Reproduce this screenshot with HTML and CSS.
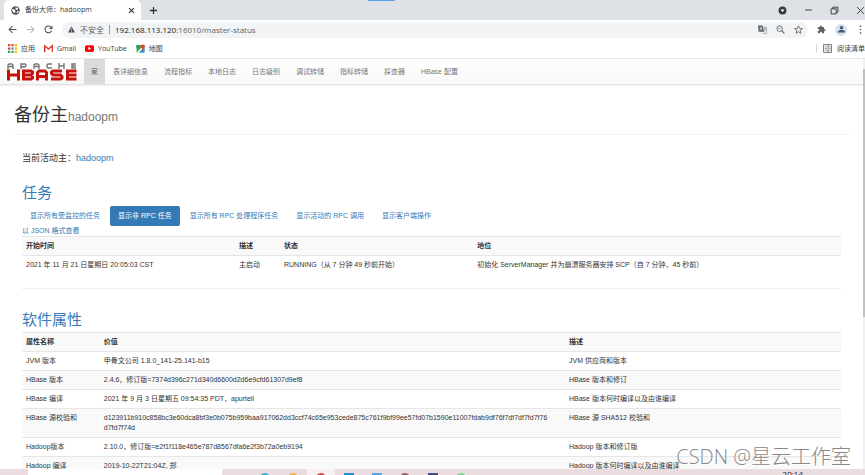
FILE: index.html
```html
<!DOCTYPE html>
<html lang="zh-CN">
<head>
    <meta charset="utf-8">
    <title>备份大师：hadoopm</title>
    <link rel="stylesheet" href="styles.css">
</head>
<body>

<header class="browser">
    <div class="tabstrip">
        <div class="tab">
            <svg class="icon" viewBox="0 0 16 16"><circle cx="8" cy="8" r="7.5" fill="#4d5156"/><path d="M2 5l4 1 2 3-1 4-3-2-2-3zM8 2l5 2-2 3-3-1zM11 9l3 0-2 4-2-1z" fill="#fff"/></svg>
            <span class="tab-title">备份大师：hadoopm</span>
            <button class="icon-btn" aria-label="关闭标签页"><svg class="icon-sm" viewBox="0 0 10 10"><path d="M1.5 1.5l7 7M8.5 1.5l-7 7" stroke="#333" stroke-width="1.6"/></svg></button>
        </div>
        <button class="icon-btn" aria-label="新标签页"><svg class="icon" viewBox="0 0 10 10"><path d="M5 1v8M1 5h8" stroke="#333" stroke-width="1.4"/></svg></button>
        <div class="progress"></div>
        <div class="window-btns">
            <button class="icon-btn" aria-label="搜索标签页"><svg class="icon" viewBox="0 0 16 16"><circle cx="8" cy="8" r="7" fill="#35383c"/><path d="M4.500 6h7L8 11z" fill="#fff"/></svg></button>
            <button class="icon-btn" aria-label="最小化"><svg class="icon" viewBox="0 0 8 8"><path d="M1 3.500h6" stroke="#333" stroke-width=".8"/></svg></button>
            <button class="icon-btn" aria-label="还原"><svg class="icon" viewBox="0 0 8 8"><path d="M1 2.500h4.500v4.500H1zM2.500 2.500V1H7v4.500H5.500" fill="none" stroke="#333" stroke-width=".8"/></svg></button>
            <button class="icon-btn" aria-label="关闭"><svg class="icon" viewBox="0 0 8 8"><path d="M1 1l6 6M7 1L1 7" stroke="#333" stroke-width=".8"/></svg></button>
        </div>
    </div>

    <div class="toolbar">
        <button class="icon-btn" aria-label="后退"><svg class="icon" viewBox="0 0 16 16"><path d="M15 8H2M8 2L2 8l6 6" fill="none" stroke="#505357" stroke-width="1.800"/></svg></button>
        <button class="icon-btn" aria-label="前进"><svg class="icon" viewBox="0 0 16 16"><path d="M1 8h13M8 2l6 6-6 6" fill="none" stroke="#b5b7ba" stroke-width="1.800"/></svg></button>
        <button class="icon-btn" aria-label="刷新"><svg class="icon" viewBox="0 0 16 16"><path d="M13.500 10A6 6 0 1 1 12.500 4" fill="none" stroke="#505357" stroke-width="2"/><path d="M15 1v6H9z" fill="#505357"/></svg></button>
        <div class="address">
            <svg class="icon-sm" viewBox="0 0 16 16"><path d="M8 1l8 14H0z" fill="#4d5156"/><path d="M8 6v4M8 11.500v2" stroke="#f1f3f4" stroke-width="1.500"/></svg>
            <span class="insecure">不安全</span>
            <span class="divider"></span>
            <span class="url"><b>192.168.113.120</b>:16010/master-status</span>
            <button class="icon-btn" aria-label="翻译"><svg class="icon" viewBox="0 0 16 16"><path d="M0 1h8l3 11H1z" fill="#5f6368"/><path d="M8 4h7v11H9" fill="none" stroke="#777"/><path d="M3 5h4M5 4v1M3 9c2-1 3-2 3-4M4 6l3 3" stroke="#fff" fill="none"/><path d="M10 7h4M12 6v1M10 12c2-1 3-3 3-5" stroke="#777" fill="none"/></svg></button>
            <button class="icon-btn" aria-label="缩放"><svg class="icon" viewBox="0 0 16 16"><circle cx="6.500" cy="6.500" r="5" fill="none" stroke="#5f6368" stroke-width="1.500"/><path d="M10 10l5 5" stroke="#5f6368" stroke-width="2"/><path d="M4 6.500h5" stroke="#5f6368"/></svg></button>
            <button class="icon-btn" aria-label="收藏"><svg class="icon" viewBox="0 0 16 16"><path d="M8 1.500l2 4.500 5 .5-4 3.200 1.300 5L8 12l-4.300 2.700L5 9.700 1 6.500 6 6z" fill="none" stroke="#5f6368" stroke-width="1.500"/></svg></button>
        </div>
        <button class="icon-btn" aria-label="扩展程序"><svg class="icon" viewBox="0 0 24 24"><path d="M20.500 11H19V7a2 2 0 0 0-2-2h-4V3.500a2.500 2.500 0 0 0-5 0V5H4a2 2 0 0 0-2 2v3.800h1.500a2.700 2.700 0 0 1 0 5.400H2V20a2 2 0 0 0 2 2h3.800v-1.500a2.700 2.700 0 0 1 5.400 0V22H17a2 2 0 0 0 2-2v-4h1.500a2.500 2.500 0 0 0 0-5z" fill="#5f6368"/></svg></button>
        <button class="avatar" aria-label="用户"><svg class="icon-sm" viewBox="0 0 16 16"><circle cx="8" cy="4" r="4" fill="#4a5878"/><path d="M0 15v-2c0-5 16-5 16 0v2z" fill="#4a5878"/></svg></button>
        <button class="icon-btn" aria-label="菜单"><svg class="icon" viewBox="0 0 16 16"><circle cx="8" cy="2" r="1.500" fill="#5f6368"/><circle cx="8" cy="8" r="1.500" fill="#5f6368"/><circle cx="8" cy="14" r="1.500" fill="#5f6368"/></svg></button>
    </div>

    <div class="bookmarks">
        <a href="#"><svg class="icon" viewBox="0 0 8 8"><path d="M0 0h2v2H0zM0 3h2v2H0z" fill="#ea4335"/><path d="M3 0h2v2H3z" fill="#ea4335"/><path d="M6 0h2v2H6zM6 6h2v2H6z" fill="#fbbc04"/><path d="M3 3h2v2H3z" fill="#4285f4"/><path d="M6 3h2v2H6z" fill="#fbbc04"/><path d="M0 6h2v2H0zM3 6h2v2H3z" fill="#34a853"/></svg>应用</a>
        <a href="#"><svg class="icon" viewBox="0 0 16 16"><path d="M1 14V3l7 6 7-6v11" fill="none" stroke="#ea4335" stroke-width="2.500"/><path d="M1 14V7" stroke="#c5221f" stroke-width="2"/></svg>Gmail</a>
        <a href="#"><svg class="icon" viewBox="0 0 16 16"><rect y="2" width="16" height="12" rx="3" fill="#f00"/><path d="M6 5l5 3-5 3z" fill="#fff"/></svg>YouTube</a>
        <a href="#"><svg class="icon" viewBox="0 0 16 16"><path d="M1 2h14v13H1z" fill="#34a853"/><path d="M1 15L13 3l2 2L5 15z" fill="#fff"/><path d="M6 15l9-9v9z" fill="#4285f4"/><path d="M1 2h6L1 8z" fill="#1b8a4b"/><path d="M12 10L8 5a4 4 0 1 1 8 0z" fill="#ea4335"/></svg>地图</a>
        <button class="reading"><svg class="icon" viewBox="0 0 16 16"><path d="M1 1h14v14H1zM9 1v14" fill="none" stroke="#5f6368" stroke-width="1.500"/><path d="M3 5h4M3 8h4M3 11h4M11 5h3M11 8h3M11 11h3" stroke="#5f6368"/></svg>阅读清单</button>
    </div>
</header>

<div class="viewport">
    <div class="page">
        <nav class="navbar">
            <a class="brand" href="#" aria-label="Apache HBase">
                <svg class="logo" viewBox="0 0 70 18">
                    <g fill="none" stroke="#777" stroke-width="1.400">
                        <path d="M1 6V2l1-1h3l1 1v4M1 3.500h5"/>
                        <path d="M14 6V1h4l1 1v1l-1 .8h-4"/>
                        <path d="M27 6V2l1-1h3l1 1v4M27 3.500h5"/>
                        <path d="M45 1h-4l-1 1v2l1 1h4"/>
                        <path d="M52 0v6M57 0v6M52 3h5"/>
                        <path d="M69 1h-4v4h4M65 3h4"/>
                    </g>
                    <g fill="none" stroke="#c4120c" stroke-width="3">
                        <path d="M1.500 6.500V17.500M11.500 6.500V17.500M1.500 12H11.500"/>
                        <path d="M16 8h8l1.500 1v1.500L24 12h-8M24 12l1.500 1.500V15L24 16H16M16.500 6.500V17.500"/>
                        <path d="M30.500 17.500V9.500L32 8h6l1.500 1.500v8M30.500 13.500h9"/>
                        <path d="M55 8h-9l-1.500 1v1.500L46 12h7.500l1.500 1.500V15l-1.500 1H44"/>
                        <path d="M69.500 8H60.500v8h9M60.500 12h9"/>
                    </g>
                </svg>
            </a>
            <a class="active" href="#">家</a>
            <a href="#">表详细信息</a>
            <a href="#">流程指标</a>
            <a href="#">本地日志</a>
            <a href="#">日志级别</a>
            <a href="#">调试转储</a>
            <a href="#">指标转储</a>
            <a href="#">探查器</a>
            <a href="#">HBase 配置</a>
        </nav>

        <main class="container">
            <div class="page-header">
                <h1>备份主<small>hadoopm</small></h1>
            </div>

            <div class="content">
                <h4>当前活动主：<a href="#">hadoopm</a></h4>

                <section class="tasks">
                    <h2><a href="#">任务</a></h2>
                    <ul class="pills">
                        <li><a href="#">显示所有受监控的任务</a></li>
                        <li><a class="active" href="#">显示非 RPC 任务</a></li>
                        <li><a href="#">显示所有 RPC 处理程序任务</a></li>
                        <li><a href="#">显示活动的 RPC 调用</a></li>
                        <li><a href="#">显示客户端操作</a></li>
                    </ul>
                    <a class="json" href="#">以 JSON 格式查看</a>
                    <table class="table task-table">
                        <tr><th>开始时间</th><th>描述</th><th>状态</th><th>地位</th></tr>
                        <tr><td>2021 年 11 月 21 日星期日 20:05:03 CST</td><td>主启动</td><td>RUNNING（从 7 分钟 49 秒前开始）</td><td>初始化 ServerManager 并为崩溃服务器安排 SCP（自 7 分钟，45 秒前）</td></tr>
                    </table>
                </section>

                <section class="attributes">
                    <h2><a href="#">软件属性</a></h2>
                    <table class="table attr-table">
                        <tr><th>属性名称</th><th>价值</th><th>描述</th></tr>
                        <tr><td>JVM 版本</td><td>甲骨文公司 1.8.0_141-25.141-b15</td><td>JVM 供应商和版本</td></tr>
                        <tr><td>HBase 版本</td><td>2.4.6，修订版=7374d396c271d340d6600d2d6e9cfd61307d9ef8</td><td>HBase 版本和修订</td></tr>
                        <tr><td>HBase 编译</td><td>2021 年 9 月 3 日星期五 09:54:35 PDT，apurtell</td><td>HBase 版本何时编译以及由谁编译</td></tr>
                        <tr><td>HBase 源校验和</td><td>d123911b910c858bc3e60dca8bf3e0b075b959baa917062dd3ccf74c65e953cede875c761f9bf99ee57fd07b1590e11007fdab9df76f7df7df7fd7f76<wbr>d7fd7f74d</td><td>HBase 源 SHA512 校验和</td></tr>
                        <tr><td>Hadoop版本</td><td>2.10.0，修订版=e2f1f118e465e787d8567dfa6e2f3b72a0eb9194</td><td>Hadoop 版本和修订版</td></tr>
                        <tr><td>Hadoop 编译</td><td>2019-10-22T21:04Z, 郑</td><td>Hadoop 版本何时编译以及由谁编译</td></tr>
                    </table>
                </section>
            </div>
        </main>
    </div>
    <div class="scrollbar"><div class="thumb"></div></div>
</div>

<footer class="taskbar">
    <div class="search"></div>
    <div class="apps">
        <span class="app"><i class="teal"></i></span>
        <span class="app"><i class="orange"></i></span>
        <span class="app current"><i class="red"></i></span>
        <span class="app"><i class="blue"></i></span>
        <span class="app"><i class="sky"></i></span>
        <span class="app"><i class="brown"></i></span>
        <span class="app"><i class="navy"></i></span>
        <span class="app"><i class="green"></i></span>
    </div>
    <time class="clock">20:14</time>
</footer>

<div class="watermark">CSDN @星云工作室</div>

</body>
</html>
```

FILE: styles.css
```css
* {
    box-sizing: border-box;
}

body {
    margin: 0;
    height: 100vh;
    display: flex;
    flex-direction: column;
    overflow: hidden;
    position: relative;
    background: #fff;
    color: #333;
    font-family: "Liberation Sans", Arial, "Noto Sans CJK SC", sans-serif;
    font-size: 7px;
    line-height: 10px;
}

a {
    color: #337ab7;
    text-decoration: none;
}

button {
    border: none;
    padding: 0;
    background: none;
    font: inherit;
    color: inherit;
}

.icon,
.icon-sm {
    display: block;
    flex: none;
    width: 9px;
    height: 9px;
}

.icon-sm {
    width: 7px;
    height: 7px;
}

/* browser */
.browser {
    flex: none;
    font-family: "Open Sans", "Noto Sans CJK SC", sans-serif;
    color: #3c4043;
}

.tabstrip {
    display: flex;
    align-items: center;
    height: 20px;
    background: #dee1e6;
}

.tab {
    display: flex;
    align-items: center;
    gap: 5px;
    width: 137px;
    height: 20px;
    margin: 0 8px 0 4px;
    padding: 0 6px 0 7px;
    background: #fff;
    border-radius: 5px 5px 0 0;
}

.tab-title {
    flex: 1;
    white-space: nowrap;
}

.progress {
    align-self: flex-start;
    width: 27px;
    height: 1px;
    margin-left: 210px;
    background: #5ba3e6;
}

.window-btns {
    display: flex;
    gap: 17px;
    margin-left: auto;
}

.toolbar {
    display: flex;
    align-items: center;
    gap: 9px;
    height: 19px;
    padding-left: 8px;
}

.address {
    flex: 1;
    display: flex;
    align-items: center;
    gap: 5px;
    height: 16px;
    padding: 0 5px 0 6px;
    border-radius: 8px;
    background: #f1f3f4;
    font-size: 8px;
}

.address .icon-btn {
    margin-left: 4px;
}

.insecure {
    color: #5f6368;
}

.divider {
    width: 1px;
    height: 9px;
    background: #9aa0a6;
}

.url {
    flex: 1;
    color: #5f6368;
}

.url b {
    font-weight: normal;
    color: #202124;
}

.avatar {
    display: flex;
    align-items: center;
    justify-content: center;
    width: 12px;
    height: 12px;
    border-radius: 50%;
    background: #d8dfea;
}

.bookmarks {
    display: flex;
    align-items: center;
    gap: 9px;
    height: 20px;
    padding-left: 8px;
    border-bottom: 1px solid #e3e5e7;
}

.bookmarks a {
    display: flex;
    align-items: center;
    gap: 4px;
    color: #3c4043;
}

.reading {
    display: flex;
    align-items: center;
    gap: 5px;
    height: 9px;
    margin-left: auto;
    padding-left: 6px;
    border-left: 1px solid #dadce0;
    white-space: nowrap;
}

/* hbase page */
.viewport {
    flex: 1;
    display: flex;
    min-height: 0;
}

.page {
    flex: 1;
    overflow: hidden;
}

.navbar {
    display: flex;
    height: 26px;
    border-bottom: 1px solid #e4e4e4;
    background: linear-gradient(#fff, #f8f8f8);
    box-shadow: 0 1px 2px #eee;
}

.navbar a {
    padding: 8px;
    color: #777;
}

.navbar .brand {
    padding: 4px 7px;
}

.logo {
    display: block;
    width: 70px;
    height: 18px;
}

.navbar .active {
    padding: 8px 7px;
    background: #dbdbdb;
    color: #555;
}

.container {
    padding: 0 14px;
}

h1, h2, h4 {
    margin: 0;
    font-weight: normal;
}

.page-header {
    height: 50px;
    padding-top: 20px;
    border-bottom: 1px solid #f2f2f2;
}

h1 {
    font-size: 18px;
    line-height: 20px;
}

h1 small {
    font-size: 12px;
    color: #777;
}

.content {
    padding: 0 8px;
}

h4 {
    padding: 17px 0 16px;
    font-size: 9px;
    line-height: 12px;
}

h2 {
    font-size: 15px;
    line-height: 20px;
}

.tasks {
    padding-bottom: 14px;
    border-bottom: 1px solid #eee;
}

.tasks h2 {
    padding: 3px 0;
}

.pills {
    display: flex;
    gap: 2px;
    margin: 0;
    padding: 0;
    list-style: none;
}

.pills a {
    display: block;
    padding: 5px 8px;
    border-radius: 2px;
}

.pills .active {
    background: #337ab7;
    color: #fff;
}

.json {
    display: block;
}

.table {
    width: 100%;
    border-collapse: collapse;
    table-layout: fixed;
}

.table th,
.table td {
    padding: 4px;
    border-top: 1px solid #e6e6e6;
    text-align: left;
    vertical-align: top;
}

.table tr:nth-child(odd) {
    background: #f9f9f9;
}

.task-table th:nth-child(1) {
    width: 26%;
}

.task-table th:nth-child(2) {
    width: 5.5%;
}

.task-table th:nth-child(3) {
    width: 23.6%;
}

.attributes h2 {
    padding: 20px 0 1px;
    line-height: 22px;
}

.attr-table th:nth-child(1) {
    width: 9.5%;
}

.attr-table th:nth-child(2) {
    width: 56.8%;
}

.scrollbar {
    width: 2px;
    padding-top: 10px;
    background: #f1f1f1;
}

.thumb {
    height: 62%;
    background: #c1c1c1;
}

/* taskbar */
.taskbar {
    flex: none;
    display: flex;
    height: 6px;
    padding: 0 62px 0 28px;
    background: #ecdce0;
    overflow: hidden;
}

.search {
    width: 194px;
    background: #fff;
}

.apps {
    display: flex;
    margin-left: 29px;
}

.app {
    width: 28px;
    height: 20px;
    padding: 4px 9px;
}

.app i {
    display: block;
    width: 10px;
    height: 10px;
    border-radius: 5px;
}

.app.current {
    background: #f7f0f2;
}

.app .teal { background: #35b8cb; }
.app .orange { background: #eeb04e; }
.app .red { background: #d9484a; }
.app .blue { background: #1692d0; border-radius: 0; }
.app .sky { background: #55a5e5; border-radius: 0; }
.app .brown { background: #8d6870; }
.app .navy { background: #4b4c7c; border-radius: 0; }
.app .green { background: #7ad49a; }

.clock {
    margin-left: auto;
    font-family: "Open Sans", sans-serif;
    font-size: 8px;
    color: #222;
}

.watermark {
    position: absolute;
    right: 14px;
    bottom: 6px;
    color: #888;
    font-family: "Open Sans", "Noto Sans CJK SC", sans-serif;
    font-size: 20px;
    font-weight: 300;
    line-height: 24px;
    text-shadow: 1px 1px 0 #fff;
}
```
